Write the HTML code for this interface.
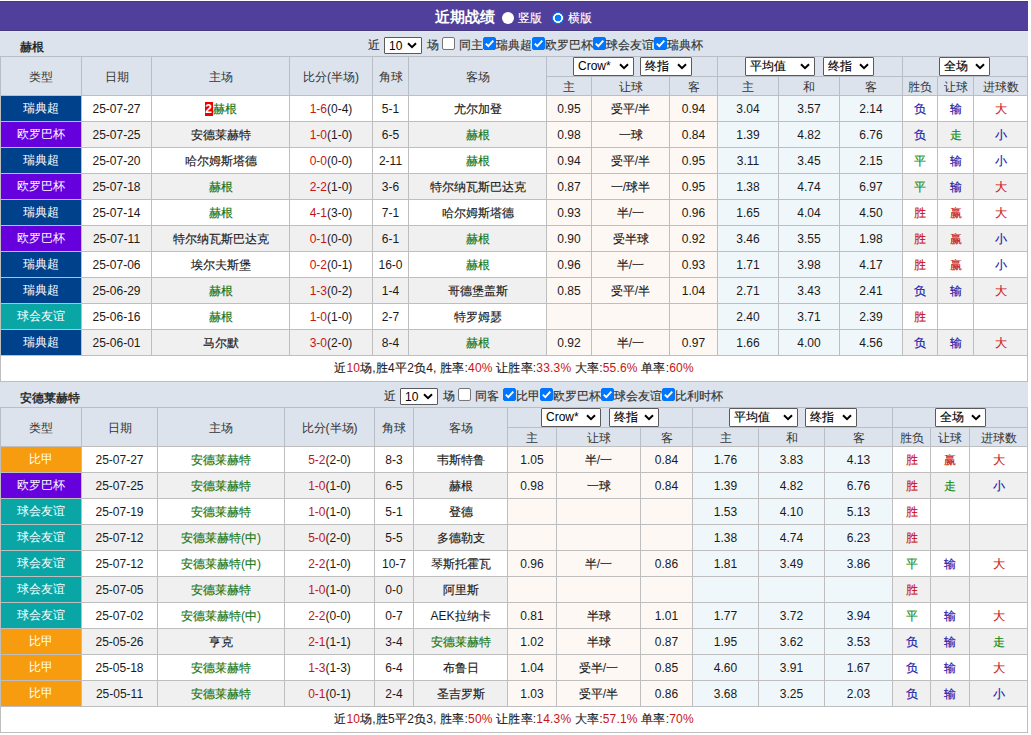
<!DOCTYPE html><html><head><meta charset="utf-8"><style>
html,body{margin:0;padding:0;background:#fff;}
body{width:1031px;height:735px;overflow:hidden;position:relative;font-family:"Liberation Sans", sans-serif;font-size:12px;}
.t{position:absolute;white-space:nowrap;font-family:"Liberation Sans", sans-serif;}
.c{-webkit-text-stroke:0.15px currentColor;}
.b .c,.w .c{-webkit-text-stroke:0;}
.st .c{-webkit-text-stroke:0.35px currentColor;}
.rk{display:inline-block;font-weight:bold;background:#e00;color:#fff;width:8px;height:14px;line-height:14px;text-align:center;vertical-align:middle;position:relative;top:-1px;}
.sel{position:absolute;box-sizing:border-box;background:#fff;border:1px solid #5a5a5a;border-radius:1px;color:#000;line-height:16px;white-space:nowrap;}
.sel > span{position:absolute;left:4px;top:0px;}
.cb{position:absolute;width:13px;height:13px;box-sizing:border-box;border:1px solid #767676;border-radius:2px;background:#fff;}
.cb.on{background:#0075ff;border-color:#0075ff;}
.cb svg{position:absolute;left:-1px;top:-1px;}
.rad{position:absolute;width:12px;height:12px;border-radius:50%;background:#fff;box-sizing:border-box;}
.rad.on{background:radial-gradient(circle closest-side,#0a7aff 0,#0a7aff 52%,#fff 60%,#fff 78%,#0a7aff 86%);}
</style></head><body><div style="position:absolute;left:0px;top:1px;width:1028px;height:30px;background:#51409b;box-sizing:border-box;border-top:1px solid #463b80;border-bottom:1px solid #463b80;"></div><div class="t b" style="left:435px;top:3px;height:28px;line-height:28px;font-size:15px;font-weight:bold;color:#fff"><span class="c">近期战绩</span></div><div class="rad" style="left:501.5px;top:11.5px"></div><div class="t" style="left:518px;top:4px;height:28px;line-height:28px;font-size:12px;color:#fff"><span class="c">竖版</span></div><div class="rad on" style="left:551.5px;top:11.5px"></div><div class="t" style="left:568px;top:4px;height:28px;line-height:28px;font-size:12px;color:#fff"><span class="c">横版</span></div><div style="position:absolute;left:0px;top:31px;width:1028px;height:25px;background:#dce3ec;"></div><div class="t st" style="left:20px;top:35px;width:200px;height:25px;line-height:25px;color:#1a1a1a;font-size:12px;font-weight:normal;text-align:left;"><span class="c">赫根</span></div><div class="t" style="left:368px;top:33px;height:25px;line-height:25px;font-size:12px;color:#333"><span class="c">近</span></div><div class="sel" style="left:384px;top:37px;width:38px;height:17px;font-family:"Liberation Mono",monospace;font-size:12px;"><span style="top:0px">10</span><svg width="10" height="7" viewBox="0 0 10 7" style="position:absolute;right:4px;top:4px"><path d="M1 1.2 L5 5.2 L9 1.2" stroke="#000" stroke-width="2" fill="none"/></svg></div><div class="t" style="left:427px;top:33px;height:25px;line-height:25px;font-size:12px;color:#333"><span class="c">场</span></div><div class="cb" style="left:442px;top:37px"></div><div class="t" style="left:459px;top:33px;height:25px;line-height:25px;font-size:12px;color:#333"><span class="c">同主</span></div><div class="cb on" style="left:483px;top:37px"><svg width="13" height="13" viewBox="0 0 13 13"><path d="M2.8 6.6 L5.3 9.2 L10.3 3.6" stroke="#fff" stroke-width="1.9" fill="none"/></svg></div><div class="t" style="left:496px;top:33px;height:25px;line-height:25px;font-size:12px;color:#333"><span class="c">瑞典超</span></div><div class="cb on" style="left:532px;top:37px"><svg width="13" height="13" viewBox="0 0 13 13"><path d="M2.8 6.6 L5.3 9.2 L10.3 3.6" stroke="#fff" stroke-width="1.9" fill="none"/></svg></div><div class="t" style="left:545px;top:33px;height:25px;line-height:25px;font-size:12px;color:#333"><span class="c">欧罗巴杯</span></div><div class="cb on" style="left:593px;top:37px"><svg width="13" height="13" viewBox="0 0 13 13"><path d="M2.8 6.6 L5.3 9.2 L10.3 3.6" stroke="#fff" stroke-width="1.9" fill="none"/></svg></div><div class="t" style="left:606px;top:33px;height:25px;line-height:25px;font-size:12px;color:#333"><span class="c">球会友谊</span></div><div class="cb on" style="left:654px;top:37px"><svg width="13" height="13" viewBox="0 0 13 13"><path d="M2.8 6.6 L5.3 9.2 L10.3 3.6" stroke="#fff" stroke-width="1.9" fill="none"/></svg></div><div class="t" style="left:667px;top:33px;height:25px;line-height:25px;font-size:12px;color:#333"><span class="c">瑞典杯</span></div><div style="position:absolute;left:0px;top:56px;width:1028px;height:39px;background:#dce3ec;"></div><div style="position:absolute;left:0px;top:95px;width:1028px;height:26px;background:#fff;"></div><div style="position:absolute;left:546px;top:95px;width:171px;height:26px;background:#fdf8f3;"></div><div style="position:absolute;left:717px;top:95px;width:185px;height:26px;background:#f0f7fb;"></div><div style="position:absolute;left:1px;top:96px;width:80px;height:25px;background:#00418c;"></div><div style="position:absolute;left:0px;top:121px;width:1028px;height:26px;background:#f0f0f0;"></div><div style="position:absolute;left:546px;top:121px;width:171px;height:26px;background:#fdf8f3;"></div><div style="position:absolute;left:717px;top:121px;width:185px;height:26px;background:#f0f7fb;"></div><div style="position:absolute;left:1px;top:122px;width:80px;height:25px;background:#6600dd;"></div><div style="position:absolute;left:0px;top:147px;width:1028px;height:26px;background:#fff;"></div><div style="position:absolute;left:546px;top:147px;width:171px;height:26px;background:#fdf8f3;"></div><div style="position:absolute;left:717px;top:147px;width:185px;height:26px;background:#f0f7fb;"></div><div style="position:absolute;left:1px;top:148px;width:80px;height:25px;background:#00418c;"></div><div style="position:absolute;left:0px;top:173px;width:1028px;height:26px;background:#f0f0f0;"></div><div style="position:absolute;left:546px;top:173px;width:171px;height:26px;background:#fdf8f3;"></div><div style="position:absolute;left:717px;top:173px;width:185px;height:26px;background:#f0f7fb;"></div><div style="position:absolute;left:1px;top:174px;width:80px;height:25px;background:#6600dd;"></div><div style="position:absolute;left:0px;top:199px;width:1028px;height:26px;background:#fff;"></div><div style="position:absolute;left:546px;top:199px;width:171px;height:26px;background:#fdf8f3;"></div><div style="position:absolute;left:717px;top:199px;width:185px;height:26px;background:#f0f7fb;"></div><div style="position:absolute;left:1px;top:200px;width:80px;height:25px;background:#00418c;"></div><div style="position:absolute;left:0px;top:225px;width:1028px;height:26px;background:#f0f0f0;"></div><div style="position:absolute;left:546px;top:225px;width:171px;height:26px;background:#fdf8f3;"></div><div style="position:absolute;left:717px;top:225px;width:185px;height:26px;background:#f0f7fb;"></div><div style="position:absolute;left:1px;top:226px;width:80px;height:25px;background:#6600dd;"></div><div style="position:absolute;left:0px;top:251px;width:1028px;height:26px;background:#fff;"></div><div style="position:absolute;left:546px;top:251px;width:171px;height:26px;background:#fdf8f3;"></div><div style="position:absolute;left:717px;top:251px;width:185px;height:26px;background:#f0f7fb;"></div><div style="position:absolute;left:1px;top:252px;width:80px;height:25px;background:#00418c;"></div><div style="position:absolute;left:0px;top:277px;width:1028px;height:26px;background:#f0f0f0;"></div><div style="position:absolute;left:546px;top:277px;width:171px;height:26px;background:#fdf8f3;"></div><div style="position:absolute;left:717px;top:277px;width:185px;height:26px;background:#f0f7fb;"></div><div style="position:absolute;left:1px;top:278px;width:80px;height:25px;background:#00418c;"></div><div style="position:absolute;left:0px;top:303px;width:1028px;height:26px;background:#fff;"></div><div style="position:absolute;left:546px;top:303px;width:171px;height:26px;background:#fdf8f3;"></div><div style="position:absolute;left:717px;top:303px;width:185px;height:26px;background:#f0f7fb;"></div><div style="position:absolute;left:1px;top:304px;width:80px;height:25px;background:#0aa5a5;"></div><div style="position:absolute;left:0px;top:329px;width:1028px;height:26px;background:#f0f0f0;"></div><div style="position:absolute;left:546px;top:329px;width:171px;height:26px;background:#fdf8f3;"></div><div style="position:absolute;left:717px;top:329px;width:185px;height:26px;background:#f0f7fb;"></div><div style="position:absolute;left:1px;top:330px;width:80px;height:25px;background:#00418c;"></div><div style="position:absolute;left:0px;top:355px;width:1028px;height:26px;background:#fff;"></div><div style="position:absolute;left:0px;top:56px;width:1px;height:39px;background:#b9bec6;"></div><div style="position:absolute;left:0px;top:95px;width:1px;height:287px;background:#bebebe;"></div><div style="position:absolute;left:81px;top:56px;width:1px;height:39px;background:#b9bec6;"></div><div style="position:absolute;left:81px;top:95px;width:1px;height:260px;background:#bebebe;"></div><div style="position:absolute;left:151px;top:56px;width:1px;height:39px;background:#b9bec6;"></div><div style="position:absolute;left:151px;top:95px;width:1px;height:260px;background:#bebebe;"></div><div style="position:absolute;left:289px;top:56px;width:1px;height:39px;background:#b9bec6;"></div><div style="position:absolute;left:289px;top:95px;width:1px;height:260px;background:#bebebe;"></div><div style="position:absolute;left:372px;top:56px;width:1px;height:39px;background:#b9bec6;"></div><div style="position:absolute;left:372px;top:95px;width:1px;height:260px;background:#bebebe;"></div><div style="position:absolute;left:408px;top:56px;width:1px;height:39px;background:#b9bec6;"></div><div style="position:absolute;left:408px;top:95px;width:1px;height:260px;background:#bebebe;"></div><div style="position:absolute;left:546px;top:56px;width:1px;height:39px;background:#b9bec6;"></div><div style="position:absolute;left:546px;top:95px;width:1px;height:260px;background:#bebebe;"></div><div style="position:absolute;left:591px;top:76px;width:1px;height:19px;background:#b9bec6;"></div><div style="position:absolute;left:591px;top:95px;width:1px;height:260px;background:#bebebe;"></div><div style="position:absolute;left:669px;top:76px;width:1px;height:19px;background:#b9bec6;"></div><div style="position:absolute;left:669px;top:95px;width:1px;height:260px;background:#bebebe;"></div><div style="position:absolute;left:717px;top:56px;width:1px;height:39px;background:#b9bec6;"></div><div style="position:absolute;left:717px;top:95px;width:1px;height:260px;background:#bebebe;"></div><div style="position:absolute;left:778px;top:76px;width:1px;height:19px;background:#b9bec6;"></div><div style="position:absolute;left:778px;top:95px;width:1px;height:260px;background:#bebebe;"></div><div style="position:absolute;left:839px;top:76px;width:1px;height:19px;background:#b9bec6;"></div><div style="position:absolute;left:839px;top:95px;width:1px;height:260px;background:#bebebe;"></div><div style="position:absolute;left:902px;top:56px;width:1px;height:39px;background:#b9bec6;"></div><div style="position:absolute;left:902px;top:95px;width:1px;height:260px;background:#bebebe;"></div><div style="position:absolute;left:937px;top:76px;width:1px;height:19px;background:#b9bec6;"></div><div style="position:absolute;left:937px;top:95px;width:1px;height:260px;background:#bebebe;"></div><div style="position:absolute;left:973px;top:76px;width:1px;height:19px;background:#b9bec6;"></div><div style="position:absolute;left:973px;top:95px;width:1px;height:260px;background:#bebebe;"></div><div style="position:absolute;left:1027px;top:56px;width:1px;height:39px;background:#b9bec6;"></div><div style="position:absolute;left:1027px;top:95px;width:1px;height:287px;background:#bebebe;"></div><div style="position:absolute;left:0px;top:56px;width:1028px;height:1px;background:#b9bec6;"></div><div style="position:absolute;left:546px;top:76px;width:481px;height:1px;background:#b9bec6;"></div><div style="position:absolute;left:0px;top:95px;width:1028px;height:1px;background:#bebebe;"></div><div style="position:absolute;left:0px;top:121px;width:1028px;height:1px;background:#bebebe;"></div><div style="position:absolute;left:0px;top:147px;width:1028px;height:1px;background:#bebebe;"></div><div style="position:absolute;left:0px;top:173px;width:1028px;height:1px;background:#bebebe;"></div><div style="position:absolute;left:0px;top:199px;width:1028px;height:1px;background:#bebebe;"></div><div style="position:absolute;left:0px;top:225px;width:1028px;height:1px;background:#bebebe;"></div><div style="position:absolute;left:0px;top:251px;width:1028px;height:1px;background:#bebebe;"></div><div style="position:absolute;left:0px;top:277px;width:1028px;height:1px;background:#bebebe;"></div><div style="position:absolute;left:0px;top:303px;width:1028px;height:1px;background:#bebebe;"></div><div style="position:absolute;left:0px;top:329px;width:1028px;height:1px;background:#bebebe;"></div><div style="position:absolute;left:0px;top:355px;width:1028px;height:1px;background:#bebebe;"></div><div style="position:absolute;left:0px;top:381px;width:1028px;height:1px;background:#bebebe;"></div><div class="t w" style="left:1px;top:58px;width:80px;height:38px;line-height:38px;color:#333;font-size:12px;font-weight:normal;text-align:center;"><span class="c">类型</span></div><div class="t w" style="left:82px;top:58px;width:69px;height:38px;line-height:38px;color:#333;font-size:12px;font-weight:normal;text-align:center;"><span class="c">日期</span></div><div class="t w" style="left:152px;top:58px;width:137px;height:38px;line-height:38px;color:#333;font-size:12px;font-weight:normal;text-align:center;"><span class="c">主场</span></div><div class="t w" style="left:290px;top:58px;width:82px;height:38px;line-height:38px;color:#333;font-size:12px;font-weight:normal;text-align:center;"><span class="c">比分</span>(<span class="c">半场</span>)</div><div class="t w" style="left:373px;top:58px;width:35px;height:38px;line-height:38px;color:#333;font-size:12px;font-weight:normal;text-align:center;"><span class="c">角球</span></div><div class="t w" style="left:409px;top:58px;width:137px;height:38px;line-height:38px;color:#333;font-size:12px;font-weight:normal;text-align:center;"><span class="c">客场</span></div><div class="t w" style="left:547px;top:78px;width:44px;height:18px;line-height:18px;color:#333;font-size:12px;font-weight:normal;text-align:center;"><span class="c">主</span></div><div class="t w" style="left:592px;top:78px;width:77px;height:18px;line-height:18px;color:#333;font-size:12px;font-weight:normal;text-align:center;"><span class="c">让球</span></div><div class="t w" style="left:670px;top:78px;width:47px;height:18px;line-height:18px;color:#333;font-size:12px;font-weight:normal;text-align:center;"><span class="c">客</span></div><div class="t w" style="left:718px;top:78px;width:60px;height:18px;line-height:18px;color:#333;font-size:12px;font-weight:normal;text-align:center;"><span class="c">主</span></div><div class="t w" style="left:779px;top:78px;width:60px;height:18px;line-height:18px;color:#333;font-size:12px;font-weight:normal;text-align:center;"><span class="c">和</span></div><div class="t w" style="left:840px;top:78px;width:62px;height:18px;line-height:18px;color:#333;font-size:12px;font-weight:normal;text-align:center;"><span class="c">客</span></div><div class="t w" style="left:903px;top:78px;width:34px;height:18px;line-height:18px;color:#333;font-size:12px;font-weight:normal;text-align:center;"><span class="c">胜负</span></div><div class="t w" style="left:938px;top:78px;width:35px;height:18px;line-height:18px;color:#333;font-size:12px;font-weight:normal;text-align:center;"><span class="c">让球</span></div><div class="t w" style="left:974px;top:78px;width:53px;height:18px;line-height:18px;color:#333;font-size:12px;font-weight:normal;text-align:center;"><span class="c">进球数</span></div><div class="t w" style="left:1px;top:96px;width:80px;height:25px;line-height:25px;color:#fff;font-size:12px;font-weight:normal;text-align:center;"><span class="c">瑞典超</span></div><div class="t" style="left:82px;top:97px;width:69px;height:25px;line-height:25px;color:#1a1a1a;font-size:12px;font-weight:normal;text-align:center;">25-07-27</div><div class="t" style="left:152px;top:97px;width:137px;height:25px;line-height:25px;color:#1a1a1a;font-size:12px;font-weight:normal;text-align:center;"><span class="rk">2</span><span style="color:#157515"><span class="c">赫根</span></span></div><div class="t" style="left:290px;top:97px;width:82px;height:25px;line-height:25px;color:#1a1a1a;font-size:12px;font-weight:normal;text-align:center;"><span style="color:#c81414">1-6</span>(0-4)</div><div class="t" style="left:373px;top:97px;width:35px;height:25px;line-height:25px;color:#1a1a1a;font-size:12px;font-weight:normal;text-align:center;">5-1</div><div class="t" style="left:409px;top:97px;width:137px;height:25px;line-height:25px;color:#1a1a1a;font-size:12px;font-weight:normal;text-align:center;"><span class="c">尤尔加登</span></div><div class="t" style="left:547px;top:97px;width:44px;height:25px;line-height:25px;color:#1a1a1a;font-size:12px;font-weight:normal;text-align:center;">0.95</div><div class="t" style="left:592px;top:97px;width:77px;height:25px;line-height:25px;color:#1a1a1a;font-size:12px;font-weight:normal;text-align:center;"><span class="c">受平</span>/<span class="c">半</span></div><div class="t" style="left:670px;top:97px;width:47px;height:25px;line-height:25px;color:#1a1a1a;font-size:12px;font-weight:normal;text-align:center;">0.94</div><div class="t" style="left:718px;top:97px;width:60px;height:25px;line-height:25px;color:#1a1a1a;font-size:12px;font-weight:normal;text-align:center;">3.04</div><div class="t" style="left:779px;top:97px;width:60px;height:25px;line-height:25px;color:#1a1a1a;font-size:12px;font-weight:normal;text-align:center;">3.57</div><div class="t" style="left:840px;top:97px;width:62px;height:25px;line-height:25px;color:#1a1a1a;font-size:12px;font-weight:normal;text-align:center;">2.14</div><div class="t" style="left:903px;top:97px;width:34px;height:25px;line-height:25px;color:#1414a8;font-size:12px;font-weight:normal;text-align:center;"><span class="c">负</span></div><div class="t" style="left:938px;top:97px;width:35px;height:25px;line-height:25px;color:#1414a8;font-size:12px;font-weight:normal;text-align:center;"><span class="c">输</span></div><div class="t" style="left:974px;top:97px;width:53px;height:25px;line-height:25px;color:#c81414;font-size:12px;font-weight:normal;text-align:center;"><span class="c">大</span></div><div class="t w" style="left:1px;top:122px;width:80px;height:25px;line-height:25px;color:#fff;font-size:12px;font-weight:normal;text-align:center;"><span class="c">欧罗巴杯</span></div><div class="t" style="left:82px;top:123px;width:69px;height:25px;line-height:25px;color:#1a1a1a;font-size:12px;font-weight:normal;text-align:center;">25-07-25</div><div class="t" style="left:152px;top:123px;width:137px;height:25px;line-height:25px;color:#1a1a1a;font-size:12px;font-weight:normal;text-align:center;"><span class="c">安德莱赫特</span></div><div class="t" style="left:290px;top:123px;width:82px;height:25px;line-height:25px;color:#1a1a1a;font-size:12px;font-weight:normal;text-align:center;"><span style="color:#c81414">1-0</span>(1-0)</div><div class="t" style="left:373px;top:123px;width:35px;height:25px;line-height:25px;color:#1a1a1a;font-size:12px;font-weight:normal;text-align:center;">6-5</div><div class="t" style="left:409px;top:123px;width:137px;height:25px;line-height:25px;color:#1a1a1a;font-size:12px;font-weight:normal;text-align:center;"><span style="color:#157515"><span class="c">赫根</span></span></div><div class="t" style="left:547px;top:123px;width:44px;height:25px;line-height:25px;color:#1a1a1a;font-size:12px;font-weight:normal;text-align:center;">0.98</div><div class="t" style="left:592px;top:123px;width:77px;height:25px;line-height:25px;color:#1a1a1a;font-size:12px;font-weight:normal;text-align:center;"><span class="c">一球</span></div><div class="t" style="left:670px;top:123px;width:47px;height:25px;line-height:25px;color:#1a1a1a;font-size:12px;font-weight:normal;text-align:center;">0.84</div><div class="t" style="left:718px;top:123px;width:60px;height:25px;line-height:25px;color:#1a1a1a;font-size:12px;font-weight:normal;text-align:center;">1.39</div><div class="t" style="left:779px;top:123px;width:60px;height:25px;line-height:25px;color:#1a1a1a;font-size:12px;font-weight:normal;text-align:center;">4.82</div><div class="t" style="left:840px;top:123px;width:62px;height:25px;line-height:25px;color:#1a1a1a;font-size:12px;font-weight:normal;text-align:center;">6.76</div><div class="t" style="left:903px;top:123px;width:34px;height:25px;line-height:25px;color:#1414a8;font-size:12px;font-weight:normal;text-align:center;"><span class="c">负</span></div><div class="t" style="left:938px;top:123px;width:35px;height:25px;line-height:25px;color:#0f8a0f;font-size:12px;font-weight:normal;text-align:center;"><span class="c">走</span></div><div class="t" style="left:974px;top:123px;width:53px;height:25px;line-height:25px;color:#1414a8;font-size:12px;font-weight:normal;text-align:center;"><span class="c">小</span></div><div class="t w" style="left:1px;top:148px;width:80px;height:25px;line-height:25px;color:#fff;font-size:12px;font-weight:normal;text-align:center;"><span class="c">瑞典超</span></div><div class="t" style="left:82px;top:149px;width:69px;height:25px;line-height:25px;color:#1a1a1a;font-size:12px;font-weight:normal;text-align:center;">25-07-20</div><div class="t" style="left:152px;top:149px;width:137px;height:25px;line-height:25px;color:#1a1a1a;font-size:12px;font-weight:normal;text-align:center;"><span class="c">哈尔姆斯塔德</span></div><div class="t" style="left:290px;top:149px;width:82px;height:25px;line-height:25px;color:#1a1a1a;font-size:12px;font-weight:normal;text-align:center;"><span style="color:#c81414">0-0</span>(0-0)</div><div class="t" style="left:373px;top:149px;width:35px;height:25px;line-height:25px;color:#1a1a1a;font-size:12px;font-weight:normal;text-align:center;">2-11</div><div class="t" style="left:409px;top:149px;width:137px;height:25px;line-height:25px;color:#1a1a1a;font-size:12px;font-weight:normal;text-align:center;"><span style="color:#157515"><span class="c">赫根</span></span></div><div class="t" style="left:547px;top:149px;width:44px;height:25px;line-height:25px;color:#1a1a1a;font-size:12px;font-weight:normal;text-align:center;">0.94</div><div class="t" style="left:592px;top:149px;width:77px;height:25px;line-height:25px;color:#1a1a1a;font-size:12px;font-weight:normal;text-align:center;"><span class="c">受平</span>/<span class="c">半</span></div><div class="t" style="left:670px;top:149px;width:47px;height:25px;line-height:25px;color:#1a1a1a;font-size:12px;font-weight:normal;text-align:center;">0.95</div><div class="t" style="left:718px;top:149px;width:60px;height:25px;line-height:25px;color:#1a1a1a;font-size:12px;font-weight:normal;text-align:center;">3.11</div><div class="t" style="left:779px;top:149px;width:60px;height:25px;line-height:25px;color:#1a1a1a;font-size:12px;font-weight:normal;text-align:center;">3.45</div><div class="t" style="left:840px;top:149px;width:62px;height:25px;line-height:25px;color:#1a1a1a;font-size:12px;font-weight:normal;text-align:center;">2.15</div><div class="t" style="left:903px;top:149px;width:34px;height:25px;line-height:25px;color:#0f8a0f;font-size:12px;font-weight:normal;text-align:center;"><span class="c">平</span></div><div class="t" style="left:938px;top:149px;width:35px;height:25px;line-height:25px;color:#1414a8;font-size:12px;font-weight:normal;text-align:center;"><span class="c">输</span></div><div class="t" style="left:974px;top:149px;width:53px;height:25px;line-height:25px;color:#1414a8;font-size:12px;font-weight:normal;text-align:center;"><span class="c">小</span></div><div class="t w" style="left:1px;top:174px;width:80px;height:25px;line-height:25px;color:#fff;font-size:12px;font-weight:normal;text-align:center;"><span class="c">欧罗巴杯</span></div><div class="t" style="left:82px;top:175px;width:69px;height:25px;line-height:25px;color:#1a1a1a;font-size:12px;font-weight:normal;text-align:center;">25-07-18</div><div class="t" style="left:152px;top:175px;width:137px;height:25px;line-height:25px;color:#1a1a1a;font-size:12px;font-weight:normal;text-align:center;"><span style="color:#157515"><span class="c">赫根</span></span></div><div class="t" style="left:290px;top:175px;width:82px;height:25px;line-height:25px;color:#1a1a1a;font-size:12px;font-weight:normal;text-align:center;"><span style="color:#c81414">2-2</span>(1-0)</div><div class="t" style="left:373px;top:175px;width:35px;height:25px;line-height:25px;color:#1a1a1a;font-size:12px;font-weight:normal;text-align:center;">3-6</div><div class="t" style="left:409px;top:175px;width:137px;height:25px;line-height:25px;color:#1a1a1a;font-size:12px;font-weight:normal;text-align:center;"><span class="c">特尔纳瓦斯巴达克</span></div><div class="t" style="left:547px;top:175px;width:44px;height:25px;line-height:25px;color:#1a1a1a;font-size:12px;font-weight:normal;text-align:center;">0.87</div><div class="t" style="left:592px;top:175px;width:77px;height:25px;line-height:25px;color:#1a1a1a;font-size:12px;font-weight:normal;text-align:center;"><span class="c">一</span>/<span class="c">球半</span></div><div class="t" style="left:670px;top:175px;width:47px;height:25px;line-height:25px;color:#1a1a1a;font-size:12px;font-weight:normal;text-align:center;">0.95</div><div class="t" style="left:718px;top:175px;width:60px;height:25px;line-height:25px;color:#1a1a1a;font-size:12px;font-weight:normal;text-align:center;">1.38</div><div class="t" style="left:779px;top:175px;width:60px;height:25px;line-height:25px;color:#1a1a1a;font-size:12px;font-weight:normal;text-align:center;">4.74</div><div class="t" style="left:840px;top:175px;width:62px;height:25px;line-height:25px;color:#1a1a1a;font-size:12px;font-weight:normal;text-align:center;">6.97</div><div class="t" style="left:903px;top:175px;width:34px;height:25px;line-height:25px;color:#0f8a0f;font-size:12px;font-weight:normal;text-align:center;"><span class="c">平</span></div><div class="t" style="left:938px;top:175px;width:35px;height:25px;line-height:25px;color:#1414a8;font-size:12px;font-weight:normal;text-align:center;"><span class="c">输</span></div><div class="t" style="left:974px;top:175px;width:53px;height:25px;line-height:25px;color:#c81414;font-size:12px;font-weight:normal;text-align:center;"><span class="c">大</span></div><div class="t w" style="left:1px;top:200px;width:80px;height:25px;line-height:25px;color:#fff;font-size:12px;font-weight:normal;text-align:center;"><span class="c">瑞典超</span></div><div class="t" style="left:82px;top:201px;width:69px;height:25px;line-height:25px;color:#1a1a1a;font-size:12px;font-weight:normal;text-align:center;">25-07-14</div><div class="t" style="left:152px;top:201px;width:137px;height:25px;line-height:25px;color:#1a1a1a;font-size:12px;font-weight:normal;text-align:center;"><span style="color:#157515"><span class="c">赫根</span></span></div><div class="t" style="left:290px;top:201px;width:82px;height:25px;line-height:25px;color:#1a1a1a;font-size:12px;font-weight:normal;text-align:center;"><span style="color:#c81414">4-1</span>(3-0)</div><div class="t" style="left:373px;top:201px;width:35px;height:25px;line-height:25px;color:#1a1a1a;font-size:12px;font-weight:normal;text-align:center;">7-1</div><div class="t" style="left:409px;top:201px;width:137px;height:25px;line-height:25px;color:#1a1a1a;font-size:12px;font-weight:normal;text-align:center;"><span class="c">哈尔姆斯塔德</span></div><div class="t" style="left:547px;top:201px;width:44px;height:25px;line-height:25px;color:#1a1a1a;font-size:12px;font-weight:normal;text-align:center;">0.93</div><div class="t" style="left:592px;top:201px;width:77px;height:25px;line-height:25px;color:#1a1a1a;font-size:12px;font-weight:normal;text-align:center;"><span class="c">半</span>/<span class="c">一</span></div><div class="t" style="left:670px;top:201px;width:47px;height:25px;line-height:25px;color:#1a1a1a;font-size:12px;font-weight:normal;text-align:center;">0.96</div><div class="t" style="left:718px;top:201px;width:60px;height:25px;line-height:25px;color:#1a1a1a;font-size:12px;font-weight:normal;text-align:center;">1.65</div><div class="t" style="left:779px;top:201px;width:60px;height:25px;line-height:25px;color:#1a1a1a;font-size:12px;font-weight:normal;text-align:center;">4.04</div><div class="t" style="left:840px;top:201px;width:62px;height:25px;line-height:25px;color:#1a1a1a;font-size:12px;font-weight:normal;text-align:center;">4.50</div><div class="t" style="left:903px;top:201px;width:34px;height:25px;line-height:25px;color:#c81414;font-size:12px;font-weight:normal;text-align:center;"><span class="c">胜</span></div><div class="t" style="left:938px;top:201px;width:35px;height:25px;line-height:25px;color:#c81414;font-size:12px;font-weight:normal;text-align:center;"><span class="c">赢</span></div><div class="t" style="left:974px;top:201px;width:53px;height:25px;line-height:25px;color:#c81414;font-size:12px;font-weight:normal;text-align:center;"><span class="c">大</span></div><div class="t w" style="left:1px;top:226px;width:80px;height:25px;line-height:25px;color:#fff;font-size:12px;font-weight:normal;text-align:center;"><span class="c">欧罗巴杯</span></div><div class="t" style="left:82px;top:227px;width:69px;height:25px;line-height:25px;color:#1a1a1a;font-size:12px;font-weight:normal;text-align:center;">25-07-11</div><div class="t" style="left:152px;top:227px;width:137px;height:25px;line-height:25px;color:#1a1a1a;font-size:12px;font-weight:normal;text-align:center;"><span class="c">特尔纳瓦斯巴达克</span></div><div class="t" style="left:290px;top:227px;width:82px;height:25px;line-height:25px;color:#1a1a1a;font-size:12px;font-weight:normal;text-align:center;"><span style="color:#c81414">0-1</span>(0-0)</div><div class="t" style="left:373px;top:227px;width:35px;height:25px;line-height:25px;color:#1a1a1a;font-size:12px;font-weight:normal;text-align:center;">6-1</div><div class="t" style="left:409px;top:227px;width:137px;height:25px;line-height:25px;color:#1a1a1a;font-size:12px;font-weight:normal;text-align:center;"><span style="color:#157515"><span class="c">赫根</span></span></div><div class="t" style="left:547px;top:227px;width:44px;height:25px;line-height:25px;color:#1a1a1a;font-size:12px;font-weight:normal;text-align:center;">0.90</div><div class="t" style="left:592px;top:227px;width:77px;height:25px;line-height:25px;color:#1a1a1a;font-size:12px;font-weight:normal;text-align:center;"><span class="c">受半球</span></div><div class="t" style="left:670px;top:227px;width:47px;height:25px;line-height:25px;color:#1a1a1a;font-size:12px;font-weight:normal;text-align:center;">0.92</div><div class="t" style="left:718px;top:227px;width:60px;height:25px;line-height:25px;color:#1a1a1a;font-size:12px;font-weight:normal;text-align:center;">3.46</div><div class="t" style="left:779px;top:227px;width:60px;height:25px;line-height:25px;color:#1a1a1a;font-size:12px;font-weight:normal;text-align:center;">3.55</div><div class="t" style="left:840px;top:227px;width:62px;height:25px;line-height:25px;color:#1a1a1a;font-size:12px;font-weight:normal;text-align:center;">1.98</div><div class="t" style="left:903px;top:227px;width:34px;height:25px;line-height:25px;color:#c81414;font-size:12px;font-weight:normal;text-align:center;"><span class="c">胜</span></div><div class="t" style="left:938px;top:227px;width:35px;height:25px;line-height:25px;color:#c81414;font-size:12px;font-weight:normal;text-align:center;"><span class="c">赢</span></div><div class="t" style="left:974px;top:227px;width:53px;height:25px;line-height:25px;color:#1414a8;font-size:12px;font-weight:normal;text-align:center;"><span class="c">小</span></div><div class="t w" style="left:1px;top:252px;width:80px;height:25px;line-height:25px;color:#fff;font-size:12px;font-weight:normal;text-align:center;"><span class="c">瑞典超</span></div><div class="t" style="left:82px;top:253px;width:69px;height:25px;line-height:25px;color:#1a1a1a;font-size:12px;font-weight:normal;text-align:center;">25-07-06</div><div class="t" style="left:152px;top:253px;width:137px;height:25px;line-height:25px;color:#1a1a1a;font-size:12px;font-weight:normal;text-align:center;"><span class="c">埃尔夫斯堡</span></div><div class="t" style="left:290px;top:253px;width:82px;height:25px;line-height:25px;color:#1a1a1a;font-size:12px;font-weight:normal;text-align:center;"><span style="color:#c81414">0-2</span>(0-1)</div><div class="t" style="left:373px;top:253px;width:35px;height:25px;line-height:25px;color:#1a1a1a;font-size:12px;font-weight:normal;text-align:center;">16-0</div><div class="t" style="left:409px;top:253px;width:137px;height:25px;line-height:25px;color:#1a1a1a;font-size:12px;font-weight:normal;text-align:center;"><span style="color:#157515"><span class="c">赫根</span></span></div><div class="t" style="left:547px;top:253px;width:44px;height:25px;line-height:25px;color:#1a1a1a;font-size:12px;font-weight:normal;text-align:center;">0.96</div><div class="t" style="left:592px;top:253px;width:77px;height:25px;line-height:25px;color:#1a1a1a;font-size:12px;font-weight:normal;text-align:center;"><span class="c">半</span>/<span class="c">一</span></div><div class="t" style="left:670px;top:253px;width:47px;height:25px;line-height:25px;color:#1a1a1a;font-size:12px;font-weight:normal;text-align:center;">0.93</div><div class="t" style="left:718px;top:253px;width:60px;height:25px;line-height:25px;color:#1a1a1a;font-size:12px;font-weight:normal;text-align:center;">1.71</div><div class="t" style="left:779px;top:253px;width:60px;height:25px;line-height:25px;color:#1a1a1a;font-size:12px;font-weight:normal;text-align:center;">3.98</div><div class="t" style="left:840px;top:253px;width:62px;height:25px;line-height:25px;color:#1a1a1a;font-size:12px;font-weight:normal;text-align:center;">4.17</div><div class="t" style="left:903px;top:253px;width:34px;height:25px;line-height:25px;color:#c81414;font-size:12px;font-weight:normal;text-align:center;"><span class="c">胜</span></div><div class="t" style="left:938px;top:253px;width:35px;height:25px;line-height:25px;color:#c81414;font-size:12px;font-weight:normal;text-align:center;"><span class="c">赢</span></div><div class="t" style="left:974px;top:253px;width:53px;height:25px;line-height:25px;color:#1414a8;font-size:12px;font-weight:normal;text-align:center;"><span class="c">小</span></div><div class="t w" style="left:1px;top:278px;width:80px;height:25px;line-height:25px;color:#fff;font-size:12px;font-weight:normal;text-align:center;"><span class="c">瑞典超</span></div><div class="t" style="left:82px;top:279px;width:69px;height:25px;line-height:25px;color:#1a1a1a;font-size:12px;font-weight:normal;text-align:center;">25-06-29</div><div class="t" style="left:152px;top:279px;width:137px;height:25px;line-height:25px;color:#1a1a1a;font-size:12px;font-weight:normal;text-align:center;"><span style="color:#157515"><span class="c">赫根</span></span></div><div class="t" style="left:290px;top:279px;width:82px;height:25px;line-height:25px;color:#1a1a1a;font-size:12px;font-weight:normal;text-align:center;"><span style="color:#c81414">1-3</span>(0-2)</div><div class="t" style="left:373px;top:279px;width:35px;height:25px;line-height:25px;color:#1a1a1a;font-size:12px;font-weight:normal;text-align:center;">1-4</div><div class="t" style="left:409px;top:279px;width:137px;height:25px;line-height:25px;color:#1a1a1a;font-size:12px;font-weight:normal;text-align:center;"><span class="c">哥德堡盖斯</span></div><div class="t" style="left:547px;top:279px;width:44px;height:25px;line-height:25px;color:#1a1a1a;font-size:12px;font-weight:normal;text-align:center;">0.85</div><div class="t" style="left:592px;top:279px;width:77px;height:25px;line-height:25px;color:#1a1a1a;font-size:12px;font-weight:normal;text-align:center;"><span class="c">受平</span>/<span class="c">半</span></div><div class="t" style="left:670px;top:279px;width:47px;height:25px;line-height:25px;color:#1a1a1a;font-size:12px;font-weight:normal;text-align:center;">1.04</div><div class="t" style="left:718px;top:279px;width:60px;height:25px;line-height:25px;color:#1a1a1a;font-size:12px;font-weight:normal;text-align:center;">2.71</div><div class="t" style="left:779px;top:279px;width:60px;height:25px;line-height:25px;color:#1a1a1a;font-size:12px;font-weight:normal;text-align:center;">3.43</div><div class="t" style="left:840px;top:279px;width:62px;height:25px;line-height:25px;color:#1a1a1a;font-size:12px;font-weight:normal;text-align:center;">2.41</div><div class="t" style="left:903px;top:279px;width:34px;height:25px;line-height:25px;color:#1414a8;font-size:12px;font-weight:normal;text-align:center;"><span class="c">负</span></div><div class="t" style="left:938px;top:279px;width:35px;height:25px;line-height:25px;color:#1414a8;font-size:12px;font-weight:normal;text-align:center;"><span class="c">输</span></div><div class="t" style="left:974px;top:279px;width:53px;height:25px;line-height:25px;color:#c81414;font-size:12px;font-weight:normal;text-align:center;"><span class="c">大</span></div><div class="t w" style="left:1px;top:304px;width:80px;height:25px;line-height:25px;color:#fff;font-size:12px;font-weight:normal;text-align:center;"><span class="c">球会友谊</span></div><div class="t" style="left:82px;top:305px;width:69px;height:25px;line-height:25px;color:#1a1a1a;font-size:12px;font-weight:normal;text-align:center;">25-06-16</div><div class="t" style="left:152px;top:305px;width:137px;height:25px;line-height:25px;color:#1a1a1a;font-size:12px;font-weight:normal;text-align:center;"><span style="color:#157515"><span class="c">赫根</span></span></div><div class="t" style="left:290px;top:305px;width:82px;height:25px;line-height:25px;color:#1a1a1a;font-size:12px;font-weight:normal;text-align:center;"><span style="color:#c81414">1-0</span>(1-0)</div><div class="t" style="left:373px;top:305px;width:35px;height:25px;line-height:25px;color:#1a1a1a;font-size:12px;font-weight:normal;text-align:center;">2-7</div><div class="t" style="left:409px;top:305px;width:137px;height:25px;line-height:25px;color:#1a1a1a;font-size:12px;font-weight:normal;text-align:center;"><span class="c">特罗姆瑟</span></div><div class="t" style="left:547px;top:305px;width:44px;height:25px;line-height:25px;color:#1a1a1a;font-size:12px;font-weight:normal;text-align:center;"></div><div class="t" style="left:592px;top:305px;width:77px;height:25px;line-height:25px;color:#1a1a1a;font-size:12px;font-weight:normal;text-align:center;"></div><div class="t" style="left:670px;top:305px;width:47px;height:25px;line-height:25px;color:#1a1a1a;font-size:12px;font-weight:normal;text-align:center;"></div><div class="t" style="left:718px;top:305px;width:60px;height:25px;line-height:25px;color:#1a1a1a;font-size:12px;font-weight:normal;text-align:center;">2.40</div><div class="t" style="left:779px;top:305px;width:60px;height:25px;line-height:25px;color:#1a1a1a;font-size:12px;font-weight:normal;text-align:center;">3.71</div><div class="t" style="left:840px;top:305px;width:62px;height:25px;line-height:25px;color:#1a1a1a;font-size:12px;font-weight:normal;text-align:center;">2.39</div><div class="t" style="left:903px;top:305px;width:34px;height:25px;line-height:25px;color:#c81414;font-size:12px;font-weight:normal;text-align:center;"><span class="c">胜</span></div><div class="t" style="left:938px;top:305px;width:35px;height:25px;line-height:25px;color:#1a1a1a;font-size:12px;font-weight:normal;text-align:center;"></div><div class="t" style="left:974px;top:305px;width:53px;height:25px;line-height:25px;color:#1a1a1a;font-size:12px;font-weight:normal;text-align:center;"></div><div class="t w" style="left:1px;top:330px;width:80px;height:25px;line-height:25px;color:#fff;font-size:12px;font-weight:normal;text-align:center;"><span class="c">瑞典超</span></div><div class="t" style="left:82px;top:331px;width:69px;height:25px;line-height:25px;color:#1a1a1a;font-size:12px;font-weight:normal;text-align:center;">25-06-01</div><div class="t" style="left:152px;top:331px;width:137px;height:25px;line-height:25px;color:#1a1a1a;font-size:12px;font-weight:normal;text-align:center;"><span class="c">马尔默</span></div><div class="t" style="left:290px;top:331px;width:82px;height:25px;line-height:25px;color:#1a1a1a;font-size:12px;font-weight:normal;text-align:center;"><span style="color:#c81414">3-0</span>(2-0)</div><div class="t" style="left:373px;top:331px;width:35px;height:25px;line-height:25px;color:#1a1a1a;font-size:12px;font-weight:normal;text-align:center;">8-4</div><div class="t" style="left:409px;top:331px;width:137px;height:25px;line-height:25px;color:#1a1a1a;font-size:12px;font-weight:normal;text-align:center;"><span style="color:#157515"><span class="c">赫根</span></span></div><div class="t" style="left:547px;top:331px;width:44px;height:25px;line-height:25px;color:#1a1a1a;font-size:12px;font-weight:normal;text-align:center;">0.92</div><div class="t" style="left:592px;top:331px;width:77px;height:25px;line-height:25px;color:#1a1a1a;font-size:12px;font-weight:normal;text-align:center;"><span class="c">半</span>/<span class="c">一</span></div><div class="t" style="left:670px;top:331px;width:47px;height:25px;line-height:25px;color:#1a1a1a;font-size:12px;font-weight:normal;text-align:center;">0.97</div><div class="t" style="left:718px;top:331px;width:60px;height:25px;line-height:25px;color:#1a1a1a;font-size:12px;font-weight:normal;text-align:center;">1.66</div><div class="t" style="left:779px;top:331px;width:60px;height:25px;line-height:25px;color:#1a1a1a;font-size:12px;font-weight:normal;text-align:center;">4.00</div><div class="t" style="left:840px;top:331px;width:62px;height:25px;line-height:25px;color:#1a1a1a;font-size:12px;font-weight:normal;text-align:center;">4.56</div><div class="t" style="left:903px;top:331px;width:34px;height:25px;line-height:25px;color:#1414a8;font-size:12px;font-weight:normal;text-align:center;"><span class="c">负</span></div><div class="t" style="left:938px;top:331px;width:35px;height:25px;line-height:25px;color:#1414a8;font-size:12px;font-weight:normal;text-align:center;"><span class="c">输</span></div><div class="t" style="left:974px;top:331px;width:53px;height:25px;line-height:25px;color:#c81414;font-size:12px;font-weight:normal;text-align:center;"><span class="c">大</span></div><div class="t" style="left:1px;top:356px;width:1026px;height:25px;line-height:25px;color:#1a1a1a;font-size:12px;font-weight:normal;text-align:center;letter-spacing:0.19px;"><span class="c">近</span><span style="color:#c81414">10</span><span class="c">场</span>,<span class="c">胜</span>4<span class="c">平</span>2<span class="c">负</span>4, <span class="c">胜率</span>:<span style="color:#c81414">40%</span> <span class="c">让胜率</span>:<span style="color:#c81414">33.3%</span> <span class="c">大率</span>:<span style="color:#c81414">55.6%</span> <span class="c">单率</span>:<span style="color:#c81414">60%</span></div><div style="position:absolute;left:0px;top:31px;width:1028px;height:1px;background:#e6e6fa;"></div><div class="sel" style="left:573px;top:57px;width:61px;height:19px;font-family:"Liberation Sans",sans-serif;font-size:13px;"><span style="top:0px">Crow*</span><svg width="10" height="7" viewBox="0 0 10 7" style="position:absolute;right:4px;top:5px"><path d="M1 1.2 L5 5.2 L9 1.2" stroke="#000" stroke-width="2" fill="none"/></svg></div><div class="sel" style="left:640px;top:57px;width:52px;height:19px;font-family:"Liberation Sans",sans-serif;font-size:13px;"><span style="top:0px"><span class="c">终指</span></span><svg width="10" height="7" viewBox="0 0 10 7" style="position:absolute;right:4px;top:5px"><path d="M1 1.2 L5 5.2 L9 1.2" stroke="#000" stroke-width="2" fill="none"/></svg></div><div class="sel" style="left:745px;top:57px;width:70px;height:19px;font-family:"Liberation Sans",sans-serif;font-size:13px;"><span style="top:0px"><span class="c">平均值</span></span><svg width="10" height="7" viewBox="0 0 10 7" style="position:absolute;right:4px;top:5px"><path d="M1 1.2 L5 5.2 L9 1.2" stroke="#000" stroke-width="2" fill="none"/></svg></div><div class="sel" style="left:823px;top:57px;width:51px;height:19px;font-family:"Liberation Sans",sans-serif;font-size:13px;"><span style="top:0px"><span class="c">终指</span></span><svg width="10" height="7" viewBox="0 0 10 7" style="position:absolute;right:4px;top:5px"><path d="M1 1.2 L5 5.2 L9 1.2" stroke="#000" stroke-width="2" fill="none"/></svg></div><div class="sel" style="left:939px;top:57px;width:51px;height:19px;font-family:"Liberation Sans",sans-serif;font-size:13px;"><span style="top:0px"><span class="c">全场</span></span><svg width="10" height="7" viewBox="0 0 10 7" style="position:absolute;right:4px;top:5px"><path d="M1 1.2 L5 5.2 L9 1.2" stroke="#000" stroke-width="2" fill="none"/></svg></div><div style="position:absolute;left:0px;top:382px;width:1028px;height:25px;background:#dce3ec;"></div><div class="t st" style="left:20px;top:386px;width:200px;height:25px;line-height:25px;color:#1a1a1a;font-size:12px;font-weight:normal;text-align:left;"><span class="c">安德莱赫特</span></div><div class="t" style="left:384px;top:384px;height:25px;line-height:25px;font-size:12px;color:#333"><span class="c">近</span></div><div class="sel" style="left:400px;top:388px;width:38px;height:17px;font-family:"Liberation Mono",monospace;font-size:12px;"><span style="top:0px">10</span><svg width="10" height="7" viewBox="0 0 10 7" style="position:absolute;right:4px;top:4px"><path d="M1 1.2 L5 5.2 L9 1.2" stroke="#000" stroke-width="2" fill="none"/></svg></div><div class="t" style="left:443px;top:384px;height:25px;line-height:25px;font-size:12px;color:#333"><span class="c">场</span></div><div class="cb" style="left:458px;top:388px"></div><div class="t" style="left:475px;top:384px;height:25px;line-height:25px;font-size:12px;color:#333"><span class="c">同客</span></div><div class="cb on" style="left:503px;top:388px"><svg width="13" height="13" viewBox="0 0 13 13"><path d="M2.8 6.6 L5.3 9.2 L10.3 3.6" stroke="#fff" stroke-width="1.9" fill="none"/></svg></div><div class="t" style="left:516px;top:384px;height:25px;line-height:25px;font-size:12px;color:#333"><span class="c">比甲</span></div><div class="cb on" style="left:540px;top:388px"><svg width="13" height="13" viewBox="0 0 13 13"><path d="M2.8 6.6 L5.3 9.2 L10.3 3.6" stroke="#fff" stroke-width="1.9" fill="none"/></svg></div><div class="t" style="left:553px;top:384px;height:25px;line-height:25px;font-size:12px;color:#333"><span class="c">欧罗巴杯</span></div><div class="cb on" style="left:601px;top:388px"><svg width="13" height="13" viewBox="0 0 13 13"><path d="M2.8 6.6 L5.3 9.2 L10.3 3.6" stroke="#fff" stroke-width="1.9" fill="none"/></svg></div><div class="t" style="left:614px;top:384px;height:25px;line-height:25px;font-size:12px;color:#333"><span class="c">球会友谊</span></div><div class="cb on" style="left:662px;top:388px"><svg width="13" height="13" viewBox="0 0 13 13"><path d="M2.8 6.6 L5.3 9.2 L10.3 3.6" stroke="#fff" stroke-width="1.9" fill="none"/></svg></div><div class="t" style="left:675px;top:384px;height:25px;line-height:25px;font-size:12px;color:#333"><span class="c">比利时杯</span></div><div style="position:absolute;left:0px;top:407px;width:1028px;height:39px;background:#dce3ec;"></div><div style="position:absolute;left:0px;top:446px;width:1028px;height:26px;background:#fff;"></div><div style="position:absolute;left:507px;top:446px;width:185px;height:26px;background:#fdf8f3;"></div><div style="position:absolute;left:692px;top:446px;width:200px;height:26px;background:#f0f7fb;"></div><div style="position:absolute;left:1px;top:447px;width:80px;height:25px;background:#f79c0f;"></div><div style="position:absolute;left:0px;top:472px;width:1028px;height:26px;background:#f0f0f0;"></div><div style="position:absolute;left:507px;top:472px;width:185px;height:26px;background:#fdf8f3;"></div><div style="position:absolute;left:692px;top:472px;width:200px;height:26px;background:#f0f7fb;"></div><div style="position:absolute;left:1px;top:473px;width:80px;height:25px;background:#6600dd;"></div><div style="position:absolute;left:0px;top:498px;width:1028px;height:26px;background:#fff;"></div><div style="position:absolute;left:507px;top:498px;width:185px;height:26px;background:#fdf8f3;"></div><div style="position:absolute;left:692px;top:498px;width:200px;height:26px;background:#f0f7fb;"></div><div style="position:absolute;left:1px;top:499px;width:80px;height:25px;background:#0aa5a5;"></div><div style="position:absolute;left:0px;top:524px;width:1028px;height:26px;background:#f0f0f0;"></div><div style="position:absolute;left:507px;top:524px;width:185px;height:26px;background:#fdf8f3;"></div><div style="position:absolute;left:692px;top:524px;width:200px;height:26px;background:#f0f7fb;"></div><div style="position:absolute;left:1px;top:525px;width:80px;height:25px;background:#0aa5a5;"></div><div style="position:absolute;left:0px;top:550px;width:1028px;height:26px;background:#fff;"></div><div style="position:absolute;left:507px;top:550px;width:185px;height:26px;background:#fdf8f3;"></div><div style="position:absolute;left:692px;top:550px;width:200px;height:26px;background:#f0f7fb;"></div><div style="position:absolute;left:1px;top:551px;width:80px;height:25px;background:#0aa5a5;"></div><div style="position:absolute;left:0px;top:576px;width:1028px;height:26px;background:#f0f0f0;"></div><div style="position:absolute;left:507px;top:576px;width:185px;height:26px;background:#fdf8f3;"></div><div style="position:absolute;left:692px;top:576px;width:200px;height:26px;background:#f0f7fb;"></div><div style="position:absolute;left:1px;top:577px;width:80px;height:25px;background:#0aa5a5;"></div><div style="position:absolute;left:0px;top:602px;width:1028px;height:26px;background:#fff;"></div><div style="position:absolute;left:507px;top:602px;width:185px;height:26px;background:#fdf8f3;"></div><div style="position:absolute;left:692px;top:602px;width:200px;height:26px;background:#f0f7fb;"></div><div style="position:absolute;left:1px;top:603px;width:80px;height:25px;background:#0aa5a5;"></div><div style="position:absolute;left:0px;top:628px;width:1028px;height:26px;background:#f0f0f0;"></div><div style="position:absolute;left:507px;top:628px;width:185px;height:26px;background:#fdf8f3;"></div><div style="position:absolute;left:692px;top:628px;width:200px;height:26px;background:#f0f7fb;"></div><div style="position:absolute;left:1px;top:629px;width:80px;height:25px;background:#f79c0f;"></div><div style="position:absolute;left:0px;top:654px;width:1028px;height:26px;background:#fff;"></div><div style="position:absolute;left:507px;top:654px;width:185px;height:26px;background:#fdf8f3;"></div><div style="position:absolute;left:692px;top:654px;width:200px;height:26px;background:#f0f7fb;"></div><div style="position:absolute;left:1px;top:655px;width:80px;height:25px;background:#f79c0f;"></div><div style="position:absolute;left:0px;top:680px;width:1028px;height:26px;background:#f0f0f0;"></div><div style="position:absolute;left:507px;top:680px;width:185px;height:26px;background:#fdf8f3;"></div><div style="position:absolute;left:692px;top:680px;width:200px;height:26px;background:#f0f7fb;"></div><div style="position:absolute;left:1px;top:681px;width:80px;height:25px;background:#f79c0f;"></div><div style="position:absolute;left:0px;top:706px;width:1028px;height:26px;background:#fff;"></div><div style="position:absolute;left:0px;top:407px;width:1px;height:39px;background:#b9bec6;"></div><div style="position:absolute;left:0px;top:446px;width:1px;height:287px;background:#bebebe;"></div><div style="position:absolute;left:81px;top:407px;width:1px;height:39px;background:#b9bec6;"></div><div style="position:absolute;left:81px;top:446px;width:1px;height:260px;background:#bebebe;"></div><div style="position:absolute;left:157px;top:407px;width:1px;height:39px;background:#b9bec6;"></div><div style="position:absolute;left:157px;top:446px;width:1px;height:260px;background:#bebebe;"></div><div style="position:absolute;left:284px;top:407px;width:1px;height:39px;background:#b9bec6;"></div><div style="position:absolute;left:284px;top:446px;width:1px;height:260px;background:#bebebe;"></div><div style="position:absolute;left:374px;top:407px;width:1px;height:39px;background:#b9bec6;"></div><div style="position:absolute;left:374px;top:446px;width:1px;height:260px;background:#bebebe;"></div><div style="position:absolute;left:413px;top:407px;width:1px;height:39px;background:#b9bec6;"></div><div style="position:absolute;left:413px;top:446px;width:1px;height:260px;background:#bebebe;"></div><div style="position:absolute;left:507px;top:407px;width:1px;height:39px;background:#b9bec6;"></div><div style="position:absolute;left:507px;top:446px;width:1px;height:260px;background:#bebebe;"></div><div style="position:absolute;left:556px;top:427px;width:1px;height:19px;background:#b9bec6;"></div><div style="position:absolute;left:556px;top:446px;width:1px;height:260px;background:#bebebe;"></div><div style="position:absolute;left:640px;top:427px;width:1px;height:19px;background:#b9bec6;"></div><div style="position:absolute;left:640px;top:446px;width:1px;height:260px;background:#bebebe;"></div><div style="position:absolute;left:692px;top:407px;width:1px;height:39px;background:#b9bec6;"></div><div style="position:absolute;left:692px;top:446px;width:1px;height:260px;background:#bebebe;"></div><div style="position:absolute;left:758px;top:427px;width:1px;height:19px;background:#b9bec6;"></div><div style="position:absolute;left:758px;top:446px;width:1px;height:260px;background:#bebebe;"></div><div style="position:absolute;left:824px;top:427px;width:1px;height:19px;background:#b9bec6;"></div><div style="position:absolute;left:824px;top:446px;width:1px;height:260px;background:#bebebe;"></div><div style="position:absolute;left:892px;top:407px;width:1px;height:39px;background:#b9bec6;"></div><div style="position:absolute;left:892px;top:446px;width:1px;height:260px;background:#bebebe;"></div><div style="position:absolute;left:930px;top:427px;width:1px;height:19px;background:#b9bec6;"></div><div style="position:absolute;left:930px;top:446px;width:1px;height:260px;background:#bebebe;"></div><div style="position:absolute;left:969px;top:427px;width:1px;height:19px;background:#b9bec6;"></div><div style="position:absolute;left:969px;top:446px;width:1px;height:260px;background:#bebebe;"></div><div style="position:absolute;left:1027px;top:407px;width:1px;height:39px;background:#b9bec6;"></div><div style="position:absolute;left:1027px;top:446px;width:1px;height:287px;background:#bebebe;"></div><div style="position:absolute;left:0px;top:407px;width:1028px;height:1px;background:#b9bec6;"></div><div style="position:absolute;left:507px;top:427px;width:520px;height:1px;background:#b9bec6;"></div><div style="position:absolute;left:0px;top:446px;width:1028px;height:1px;background:#bebebe;"></div><div style="position:absolute;left:0px;top:472px;width:1028px;height:1px;background:#bebebe;"></div><div style="position:absolute;left:0px;top:498px;width:1028px;height:1px;background:#bebebe;"></div><div style="position:absolute;left:0px;top:524px;width:1028px;height:1px;background:#bebebe;"></div><div style="position:absolute;left:0px;top:550px;width:1028px;height:1px;background:#bebebe;"></div><div style="position:absolute;left:0px;top:576px;width:1028px;height:1px;background:#bebebe;"></div><div style="position:absolute;left:0px;top:602px;width:1028px;height:1px;background:#bebebe;"></div><div style="position:absolute;left:0px;top:628px;width:1028px;height:1px;background:#bebebe;"></div><div style="position:absolute;left:0px;top:654px;width:1028px;height:1px;background:#bebebe;"></div><div style="position:absolute;left:0px;top:680px;width:1028px;height:1px;background:#bebebe;"></div><div style="position:absolute;left:0px;top:706px;width:1028px;height:1px;background:#bebebe;"></div><div style="position:absolute;left:0px;top:732px;width:1028px;height:1px;background:#bebebe;"></div><div class="t w" style="left:1px;top:409px;width:80px;height:38px;line-height:38px;color:#333;font-size:12px;font-weight:normal;text-align:center;"><span class="c">类型</span></div><div class="t w" style="left:82px;top:409px;width:75px;height:38px;line-height:38px;color:#333;font-size:12px;font-weight:normal;text-align:center;"><span class="c">日期</span></div><div class="t w" style="left:158px;top:409px;width:126px;height:38px;line-height:38px;color:#333;font-size:12px;font-weight:normal;text-align:center;"><span class="c">主场</span></div><div class="t w" style="left:285px;top:409px;width:89px;height:38px;line-height:38px;color:#333;font-size:12px;font-weight:normal;text-align:center;"><span class="c">比分</span>(<span class="c">半场</span>)</div><div class="t w" style="left:375px;top:409px;width:38px;height:38px;line-height:38px;color:#333;font-size:12px;font-weight:normal;text-align:center;"><span class="c">角球</span></div><div class="t w" style="left:414px;top:409px;width:93px;height:38px;line-height:38px;color:#333;font-size:12px;font-weight:normal;text-align:center;"><span class="c">客场</span></div><div class="t w" style="left:508px;top:429px;width:48px;height:18px;line-height:18px;color:#333;font-size:12px;font-weight:normal;text-align:center;"><span class="c">主</span></div><div class="t w" style="left:557px;top:429px;width:83px;height:18px;line-height:18px;color:#333;font-size:12px;font-weight:normal;text-align:center;"><span class="c">让球</span></div><div class="t w" style="left:641px;top:429px;width:51px;height:18px;line-height:18px;color:#333;font-size:12px;font-weight:normal;text-align:center;"><span class="c">客</span></div><div class="t w" style="left:693px;top:429px;width:65px;height:18px;line-height:18px;color:#333;font-size:12px;font-weight:normal;text-align:center;"><span class="c">主</span></div><div class="t w" style="left:759px;top:429px;width:65px;height:18px;line-height:18px;color:#333;font-size:12px;font-weight:normal;text-align:center;"><span class="c">和</span></div><div class="t w" style="left:825px;top:429px;width:67px;height:18px;line-height:18px;color:#333;font-size:12px;font-weight:normal;text-align:center;"><span class="c">客</span></div><div class="t w" style="left:893px;top:429px;width:37px;height:18px;line-height:18px;color:#333;font-size:12px;font-weight:normal;text-align:center;"><span class="c">胜负</span></div><div class="t w" style="left:931px;top:429px;width:38px;height:18px;line-height:18px;color:#333;font-size:12px;font-weight:normal;text-align:center;"><span class="c">让球</span></div><div class="t w" style="left:970px;top:429px;width:57px;height:18px;line-height:18px;color:#333;font-size:12px;font-weight:normal;text-align:center;"><span class="c">进球数</span></div><div class="t w" style="left:1px;top:447px;width:80px;height:25px;line-height:25px;color:#fff;font-size:12px;font-weight:normal;text-align:center;"><span class="c">比甲</span></div><div class="t" style="left:82px;top:448px;width:75px;height:25px;line-height:25px;color:#1a1a1a;font-size:12px;font-weight:normal;text-align:center;">25-07-27</div><div class="t" style="left:158px;top:448px;width:126px;height:25px;line-height:25px;color:#1a1a1a;font-size:12px;font-weight:normal;text-align:center;"><span style="color:#157515"><span class="c">安德莱赫特</span></span></div><div class="t" style="left:285px;top:448px;width:89px;height:25px;line-height:25px;color:#1a1a1a;font-size:12px;font-weight:normal;text-align:center;"><span style="color:#c81414">5-2</span>(2-0)</div><div class="t" style="left:375px;top:448px;width:38px;height:25px;line-height:25px;color:#1a1a1a;font-size:12px;font-weight:normal;text-align:center;">8-3</div><div class="t" style="left:414px;top:448px;width:93px;height:25px;line-height:25px;color:#1a1a1a;font-size:12px;font-weight:normal;text-align:center;"><span class="c">韦斯特鲁</span></div><div class="t" style="left:508px;top:448px;width:48px;height:25px;line-height:25px;color:#1a1a1a;font-size:12px;font-weight:normal;text-align:center;">1.05</div><div class="t" style="left:557px;top:448px;width:83px;height:25px;line-height:25px;color:#1a1a1a;font-size:12px;font-weight:normal;text-align:center;"><span class="c">半</span>/<span class="c">一</span></div><div class="t" style="left:641px;top:448px;width:51px;height:25px;line-height:25px;color:#1a1a1a;font-size:12px;font-weight:normal;text-align:center;">0.84</div><div class="t" style="left:693px;top:448px;width:65px;height:25px;line-height:25px;color:#1a1a1a;font-size:12px;font-weight:normal;text-align:center;">1.76</div><div class="t" style="left:759px;top:448px;width:65px;height:25px;line-height:25px;color:#1a1a1a;font-size:12px;font-weight:normal;text-align:center;">3.83</div><div class="t" style="left:825px;top:448px;width:67px;height:25px;line-height:25px;color:#1a1a1a;font-size:12px;font-weight:normal;text-align:center;">4.13</div><div class="t" style="left:893px;top:448px;width:37px;height:25px;line-height:25px;color:#c81414;font-size:12px;font-weight:normal;text-align:center;"><span class="c">胜</span></div><div class="t" style="left:931px;top:448px;width:38px;height:25px;line-height:25px;color:#c81414;font-size:12px;font-weight:normal;text-align:center;"><span class="c">赢</span></div><div class="t" style="left:970px;top:448px;width:57px;height:25px;line-height:25px;color:#c81414;font-size:12px;font-weight:normal;text-align:center;"><span class="c">大</span></div><div class="t w" style="left:1px;top:473px;width:80px;height:25px;line-height:25px;color:#fff;font-size:12px;font-weight:normal;text-align:center;"><span class="c">欧罗巴杯</span></div><div class="t" style="left:82px;top:474px;width:75px;height:25px;line-height:25px;color:#1a1a1a;font-size:12px;font-weight:normal;text-align:center;">25-07-25</div><div class="t" style="left:158px;top:474px;width:126px;height:25px;line-height:25px;color:#1a1a1a;font-size:12px;font-weight:normal;text-align:center;"><span style="color:#157515"><span class="c">安德莱赫特</span></span></div><div class="t" style="left:285px;top:474px;width:89px;height:25px;line-height:25px;color:#1a1a1a;font-size:12px;font-weight:normal;text-align:center;"><span style="color:#c81414">1-0</span>(1-0)</div><div class="t" style="left:375px;top:474px;width:38px;height:25px;line-height:25px;color:#1a1a1a;font-size:12px;font-weight:normal;text-align:center;">6-5</div><div class="t" style="left:414px;top:474px;width:93px;height:25px;line-height:25px;color:#1a1a1a;font-size:12px;font-weight:normal;text-align:center;"><span class="c">赫根</span></div><div class="t" style="left:508px;top:474px;width:48px;height:25px;line-height:25px;color:#1a1a1a;font-size:12px;font-weight:normal;text-align:center;">0.98</div><div class="t" style="left:557px;top:474px;width:83px;height:25px;line-height:25px;color:#1a1a1a;font-size:12px;font-weight:normal;text-align:center;"><span class="c">一球</span></div><div class="t" style="left:641px;top:474px;width:51px;height:25px;line-height:25px;color:#1a1a1a;font-size:12px;font-weight:normal;text-align:center;">0.84</div><div class="t" style="left:693px;top:474px;width:65px;height:25px;line-height:25px;color:#1a1a1a;font-size:12px;font-weight:normal;text-align:center;">1.39</div><div class="t" style="left:759px;top:474px;width:65px;height:25px;line-height:25px;color:#1a1a1a;font-size:12px;font-weight:normal;text-align:center;">4.82</div><div class="t" style="left:825px;top:474px;width:67px;height:25px;line-height:25px;color:#1a1a1a;font-size:12px;font-weight:normal;text-align:center;">6.76</div><div class="t" style="left:893px;top:474px;width:37px;height:25px;line-height:25px;color:#c81414;font-size:12px;font-weight:normal;text-align:center;"><span class="c">胜</span></div><div class="t" style="left:931px;top:474px;width:38px;height:25px;line-height:25px;color:#0f8a0f;font-size:12px;font-weight:normal;text-align:center;"><span class="c">走</span></div><div class="t" style="left:970px;top:474px;width:57px;height:25px;line-height:25px;color:#1414a8;font-size:12px;font-weight:normal;text-align:center;"><span class="c">小</span></div><div class="t w" style="left:1px;top:499px;width:80px;height:25px;line-height:25px;color:#fff;font-size:12px;font-weight:normal;text-align:center;"><span class="c">球会友谊</span></div><div class="t" style="left:82px;top:500px;width:75px;height:25px;line-height:25px;color:#1a1a1a;font-size:12px;font-weight:normal;text-align:center;">25-07-19</div><div class="t" style="left:158px;top:500px;width:126px;height:25px;line-height:25px;color:#1a1a1a;font-size:12px;font-weight:normal;text-align:center;"><span style="color:#157515"><span class="c">安德莱赫特</span></span></div><div class="t" style="left:285px;top:500px;width:89px;height:25px;line-height:25px;color:#1a1a1a;font-size:12px;font-weight:normal;text-align:center;"><span style="color:#c81414">1-0</span>(1-0)</div><div class="t" style="left:375px;top:500px;width:38px;height:25px;line-height:25px;color:#1a1a1a;font-size:12px;font-weight:normal;text-align:center;">5-1</div><div class="t" style="left:414px;top:500px;width:93px;height:25px;line-height:25px;color:#1a1a1a;font-size:12px;font-weight:normal;text-align:center;"><span class="c">登德</span></div><div class="t" style="left:508px;top:500px;width:48px;height:25px;line-height:25px;color:#1a1a1a;font-size:12px;font-weight:normal;text-align:center;"></div><div class="t" style="left:557px;top:500px;width:83px;height:25px;line-height:25px;color:#1a1a1a;font-size:12px;font-weight:normal;text-align:center;"></div><div class="t" style="left:641px;top:500px;width:51px;height:25px;line-height:25px;color:#1a1a1a;font-size:12px;font-weight:normal;text-align:center;"></div><div class="t" style="left:693px;top:500px;width:65px;height:25px;line-height:25px;color:#1a1a1a;font-size:12px;font-weight:normal;text-align:center;">1.53</div><div class="t" style="left:759px;top:500px;width:65px;height:25px;line-height:25px;color:#1a1a1a;font-size:12px;font-weight:normal;text-align:center;">4.10</div><div class="t" style="left:825px;top:500px;width:67px;height:25px;line-height:25px;color:#1a1a1a;font-size:12px;font-weight:normal;text-align:center;">5.13</div><div class="t" style="left:893px;top:500px;width:37px;height:25px;line-height:25px;color:#c81414;font-size:12px;font-weight:normal;text-align:center;"><span class="c">胜</span></div><div class="t" style="left:931px;top:500px;width:38px;height:25px;line-height:25px;color:#1a1a1a;font-size:12px;font-weight:normal;text-align:center;"></div><div class="t" style="left:970px;top:500px;width:57px;height:25px;line-height:25px;color:#1a1a1a;font-size:12px;font-weight:normal;text-align:center;"></div><div class="t w" style="left:1px;top:525px;width:80px;height:25px;line-height:25px;color:#fff;font-size:12px;font-weight:normal;text-align:center;"><span class="c">球会友谊</span></div><div class="t" style="left:82px;top:526px;width:75px;height:25px;line-height:25px;color:#1a1a1a;font-size:12px;font-weight:normal;text-align:center;">25-07-12</div><div class="t" style="left:158px;top:526px;width:126px;height:25px;line-height:25px;color:#1a1a1a;font-size:12px;font-weight:normal;text-align:center;"><span style="color:#157515"><span class="c">安德莱赫特</span>(<span class="c">中</span>)</span></div><div class="t" style="left:285px;top:526px;width:89px;height:25px;line-height:25px;color:#1a1a1a;font-size:12px;font-weight:normal;text-align:center;"><span style="color:#c81414">5-0</span>(2-0)</div><div class="t" style="left:375px;top:526px;width:38px;height:25px;line-height:25px;color:#1a1a1a;font-size:12px;font-weight:normal;text-align:center;">5-5</div><div class="t" style="left:414px;top:526px;width:93px;height:25px;line-height:25px;color:#1a1a1a;font-size:12px;font-weight:normal;text-align:center;"><span class="c">多德勒支</span></div><div class="t" style="left:508px;top:526px;width:48px;height:25px;line-height:25px;color:#1a1a1a;font-size:12px;font-weight:normal;text-align:center;"></div><div class="t" style="left:557px;top:526px;width:83px;height:25px;line-height:25px;color:#1a1a1a;font-size:12px;font-weight:normal;text-align:center;"></div><div class="t" style="left:641px;top:526px;width:51px;height:25px;line-height:25px;color:#1a1a1a;font-size:12px;font-weight:normal;text-align:center;"></div><div class="t" style="left:693px;top:526px;width:65px;height:25px;line-height:25px;color:#1a1a1a;font-size:12px;font-weight:normal;text-align:center;">1.38</div><div class="t" style="left:759px;top:526px;width:65px;height:25px;line-height:25px;color:#1a1a1a;font-size:12px;font-weight:normal;text-align:center;">4.74</div><div class="t" style="left:825px;top:526px;width:67px;height:25px;line-height:25px;color:#1a1a1a;font-size:12px;font-weight:normal;text-align:center;">6.23</div><div class="t" style="left:893px;top:526px;width:37px;height:25px;line-height:25px;color:#c81414;font-size:12px;font-weight:normal;text-align:center;"><span class="c">胜</span></div><div class="t" style="left:931px;top:526px;width:38px;height:25px;line-height:25px;color:#1a1a1a;font-size:12px;font-weight:normal;text-align:center;"></div><div class="t" style="left:970px;top:526px;width:57px;height:25px;line-height:25px;color:#1a1a1a;font-size:12px;font-weight:normal;text-align:center;"></div><div class="t w" style="left:1px;top:551px;width:80px;height:25px;line-height:25px;color:#fff;font-size:12px;font-weight:normal;text-align:center;"><span class="c">球会友谊</span></div><div class="t" style="left:82px;top:552px;width:75px;height:25px;line-height:25px;color:#1a1a1a;font-size:12px;font-weight:normal;text-align:center;">25-07-12</div><div class="t" style="left:158px;top:552px;width:126px;height:25px;line-height:25px;color:#1a1a1a;font-size:12px;font-weight:normal;text-align:center;"><span style="color:#157515"><span class="c">安德莱赫特</span>(<span class="c">中</span>)</span></div><div class="t" style="left:285px;top:552px;width:89px;height:25px;line-height:25px;color:#1a1a1a;font-size:12px;font-weight:normal;text-align:center;"><span style="color:#c81414">2-2</span>(1-0)</div><div class="t" style="left:375px;top:552px;width:38px;height:25px;line-height:25px;color:#1a1a1a;font-size:12px;font-weight:normal;text-align:center;">10-7</div><div class="t" style="left:414px;top:552px;width:93px;height:25px;line-height:25px;color:#1a1a1a;font-size:12px;font-weight:normal;text-align:center;"><span class="c">琴斯托霍瓦</span></div><div class="t" style="left:508px;top:552px;width:48px;height:25px;line-height:25px;color:#1a1a1a;font-size:12px;font-weight:normal;text-align:center;">0.96</div><div class="t" style="left:557px;top:552px;width:83px;height:25px;line-height:25px;color:#1a1a1a;font-size:12px;font-weight:normal;text-align:center;"><span class="c">半</span>/<span class="c">一</span></div><div class="t" style="left:641px;top:552px;width:51px;height:25px;line-height:25px;color:#1a1a1a;font-size:12px;font-weight:normal;text-align:center;">0.86</div><div class="t" style="left:693px;top:552px;width:65px;height:25px;line-height:25px;color:#1a1a1a;font-size:12px;font-weight:normal;text-align:center;">1.81</div><div class="t" style="left:759px;top:552px;width:65px;height:25px;line-height:25px;color:#1a1a1a;font-size:12px;font-weight:normal;text-align:center;">3.49</div><div class="t" style="left:825px;top:552px;width:67px;height:25px;line-height:25px;color:#1a1a1a;font-size:12px;font-weight:normal;text-align:center;">3.86</div><div class="t" style="left:893px;top:552px;width:37px;height:25px;line-height:25px;color:#0f8a0f;font-size:12px;font-weight:normal;text-align:center;"><span class="c">平</span></div><div class="t" style="left:931px;top:552px;width:38px;height:25px;line-height:25px;color:#1414a8;font-size:12px;font-weight:normal;text-align:center;"><span class="c">输</span></div><div class="t" style="left:970px;top:552px;width:57px;height:25px;line-height:25px;color:#c81414;font-size:12px;font-weight:normal;text-align:center;"><span class="c">大</span></div><div class="t w" style="left:1px;top:577px;width:80px;height:25px;line-height:25px;color:#fff;font-size:12px;font-weight:normal;text-align:center;"><span class="c">球会友谊</span></div><div class="t" style="left:82px;top:578px;width:75px;height:25px;line-height:25px;color:#1a1a1a;font-size:12px;font-weight:normal;text-align:center;">25-07-05</div><div class="t" style="left:158px;top:578px;width:126px;height:25px;line-height:25px;color:#1a1a1a;font-size:12px;font-weight:normal;text-align:center;"><span style="color:#157515"><span class="c">安德莱赫特</span></span></div><div class="t" style="left:285px;top:578px;width:89px;height:25px;line-height:25px;color:#1a1a1a;font-size:12px;font-weight:normal;text-align:center;"><span style="color:#c81414">1-0</span>(1-0)</div><div class="t" style="left:375px;top:578px;width:38px;height:25px;line-height:25px;color:#1a1a1a;font-size:12px;font-weight:normal;text-align:center;">0-0</div><div class="t" style="left:414px;top:578px;width:93px;height:25px;line-height:25px;color:#1a1a1a;font-size:12px;font-weight:normal;text-align:center;"><span class="c">阿里斯</span></div><div class="t" style="left:508px;top:578px;width:48px;height:25px;line-height:25px;color:#1a1a1a;font-size:12px;font-weight:normal;text-align:center;"></div><div class="t" style="left:557px;top:578px;width:83px;height:25px;line-height:25px;color:#1a1a1a;font-size:12px;font-weight:normal;text-align:center;"></div><div class="t" style="left:641px;top:578px;width:51px;height:25px;line-height:25px;color:#1a1a1a;font-size:12px;font-weight:normal;text-align:center;"></div><div class="t" style="left:693px;top:578px;width:65px;height:25px;line-height:25px;color:#1a1a1a;font-size:12px;font-weight:normal;text-align:center;"></div><div class="t" style="left:759px;top:578px;width:65px;height:25px;line-height:25px;color:#1a1a1a;font-size:12px;font-weight:normal;text-align:center;"></div><div class="t" style="left:825px;top:578px;width:67px;height:25px;line-height:25px;color:#1a1a1a;font-size:12px;font-weight:normal;text-align:center;"></div><div class="t" style="left:893px;top:578px;width:37px;height:25px;line-height:25px;color:#c81414;font-size:12px;font-weight:normal;text-align:center;"><span class="c">胜</span></div><div class="t" style="left:931px;top:578px;width:38px;height:25px;line-height:25px;color:#1a1a1a;font-size:12px;font-weight:normal;text-align:center;"></div><div class="t" style="left:970px;top:578px;width:57px;height:25px;line-height:25px;color:#1a1a1a;font-size:12px;font-weight:normal;text-align:center;"></div><div class="t w" style="left:1px;top:603px;width:80px;height:25px;line-height:25px;color:#fff;font-size:12px;font-weight:normal;text-align:center;"><span class="c">球会友谊</span></div><div class="t" style="left:82px;top:604px;width:75px;height:25px;line-height:25px;color:#1a1a1a;font-size:12px;font-weight:normal;text-align:center;">25-07-02</div><div class="t" style="left:158px;top:604px;width:126px;height:25px;line-height:25px;color:#1a1a1a;font-size:12px;font-weight:normal;text-align:center;"><span style="color:#157515"><span class="c">安德莱赫特</span>(<span class="c">中</span>)</span></div><div class="t" style="left:285px;top:604px;width:89px;height:25px;line-height:25px;color:#1a1a1a;font-size:12px;font-weight:normal;text-align:center;"><span style="color:#c81414">2-2</span>(0-0)</div><div class="t" style="left:375px;top:604px;width:38px;height:25px;line-height:25px;color:#1a1a1a;font-size:12px;font-weight:normal;text-align:center;">0-7</div><div class="t" style="left:414px;top:604px;width:93px;height:25px;line-height:25px;color:#1a1a1a;font-size:12px;font-weight:normal;text-align:center;">AEK<span class="c">拉纳卡</span></div><div class="t" style="left:508px;top:604px;width:48px;height:25px;line-height:25px;color:#1a1a1a;font-size:12px;font-weight:normal;text-align:center;">0.81</div><div class="t" style="left:557px;top:604px;width:83px;height:25px;line-height:25px;color:#1a1a1a;font-size:12px;font-weight:normal;text-align:center;"><span class="c">半球</span></div><div class="t" style="left:641px;top:604px;width:51px;height:25px;line-height:25px;color:#1a1a1a;font-size:12px;font-weight:normal;text-align:center;">1.01</div><div class="t" style="left:693px;top:604px;width:65px;height:25px;line-height:25px;color:#1a1a1a;font-size:12px;font-weight:normal;text-align:center;">1.77</div><div class="t" style="left:759px;top:604px;width:65px;height:25px;line-height:25px;color:#1a1a1a;font-size:12px;font-weight:normal;text-align:center;">3.72</div><div class="t" style="left:825px;top:604px;width:67px;height:25px;line-height:25px;color:#1a1a1a;font-size:12px;font-weight:normal;text-align:center;">3.94</div><div class="t" style="left:893px;top:604px;width:37px;height:25px;line-height:25px;color:#0f8a0f;font-size:12px;font-weight:normal;text-align:center;"><span class="c">平</span></div><div class="t" style="left:931px;top:604px;width:38px;height:25px;line-height:25px;color:#1414a8;font-size:12px;font-weight:normal;text-align:center;"><span class="c">输</span></div><div class="t" style="left:970px;top:604px;width:57px;height:25px;line-height:25px;color:#c81414;font-size:12px;font-weight:normal;text-align:center;"><span class="c">大</span></div><div class="t w" style="left:1px;top:629px;width:80px;height:25px;line-height:25px;color:#fff;font-size:12px;font-weight:normal;text-align:center;"><span class="c">比甲</span></div><div class="t" style="left:82px;top:630px;width:75px;height:25px;line-height:25px;color:#1a1a1a;font-size:12px;font-weight:normal;text-align:center;">25-05-26</div><div class="t" style="left:158px;top:630px;width:126px;height:25px;line-height:25px;color:#1a1a1a;font-size:12px;font-weight:normal;text-align:center;"><span class="c">亨克</span></div><div class="t" style="left:285px;top:630px;width:89px;height:25px;line-height:25px;color:#1a1a1a;font-size:12px;font-weight:normal;text-align:center;"><span style="color:#c81414">2-1</span>(1-1)</div><div class="t" style="left:375px;top:630px;width:38px;height:25px;line-height:25px;color:#1a1a1a;font-size:12px;font-weight:normal;text-align:center;">3-4</div><div class="t" style="left:414px;top:630px;width:93px;height:25px;line-height:25px;color:#1a1a1a;font-size:12px;font-weight:normal;text-align:center;"><span style="color:#157515"><span class="c">安德莱赫特</span></span></div><div class="t" style="left:508px;top:630px;width:48px;height:25px;line-height:25px;color:#1a1a1a;font-size:12px;font-weight:normal;text-align:center;">1.02</div><div class="t" style="left:557px;top:630px;width:83px;height:25px;line-height:25px;color:#1a1a1a;font-size:12px;font-weight:normal;text-align:center;"><span class="c">半球</span></div><div class="t" style="left:641px;top:630px;width:51px;height:25px;line-height:25px;color:#1a1a1a;font-size:12px;font-weight:normal;text-align:center;">0.87</div><div class="t" style="left:693px;top:630px;width:65px;height:25px;line-height:25px;color:#1a1a1a;font-size:12px;font-weight:normal;text-align:center;">1.95</div><div class="t" style="left:759px;top:630px;width:65px;height:25px;line-height:25px;color:#1a1a1a;font-size:12px;font-weight:normal;text-align:center;">3.62</div><div class="t" style="left:825px;top:630px;width:67px;height:25px;line-height:25px;color:#1a1a1a;font-size:12px;font-weight:normal;text-align:center;">3.53</div><div class="t" style="left:893px;top:630px;width:37px;height:25px;line-height:25px;color:#1414a8;font-size:12px;font-weight:normal;text-align:center;"><span class="c">负</span></div><div class="t" style="left:931px;top:630px;width:38px;height:25px;line-height:25px;color:#1414a8;font-size:12px;font-weight:normal;text-align:center;"><span class="c">输</span></div><div class="t" style="left:970px;top:630px;width:57px;height:25px;line-height:25px;color:#0f8a0f;font-size:12px;font-weight:normal;text-align:center;"><span class="c">走</span></div><div class="t w" style="left:1px;top:655px;width:80px;height:25px;line-height:25px;color:#fff;font-size:12px;font-weight:normal;text-align:center;"><span class="c">比甲</span></div><div class="t" style="left:82px;top:656px;width:75px;height:25px;line-height:25px;color:#1a1a1a;font-size:12px;font-weight:normal;text-align:center;">25-05-18</div><div class="t" style="left:158px;top:656px;width:126px;height:25px;line-height:25px;color:#1a1a1a;font-size:12px;font-weight:normal;text-align:center;"><span style="color:#157515"><span class="c">安德莱赫特</span></span></div><div class="t" style="left:285px;top:656px;width:89px;height:25px;line-height:25px;color:#1a1a1a;font-size:12px;font-weight:normal;text-align:center;"><span style="color:#c81414">1-3</span>(1-3)</div><div class="t" style="left:375px;top:656px;width:38px;height:25px;line-height:25px;color:#1a1a1a;font-size:12px;font-weight:normal;text-align:center;">6-4</div><div class="t" style="left:414px;top:656px;width:93px;height:25px;line-height:25px;color:#1a1a1a;font-size:12px;font-weight:normal;text-align:center;"><span class="c">布鲁日</span></div><div class="t" style="left:508px;top:656px;width:48px;height:25px;line-height:25px;color:#1a1a1a;font-size:12px;font-weight:normal;text-align:center;">1.04</div><div class="t" style="left:557px;top:656px;width:83px;height:25px;line-height:25px;color:#1a1a1a;font-size:12px;font-weight:normal;text-align:center;"><span class="c">受半</span>/<span class="c">一</span></div><div class="t" style="left:641px;top:656px;width:51px;height:25px;line-height:25px;color:#1a1a1a;font-size:12px;font-weight:normal;text-align:center;">0.85</div><div class="t" style="left:693px;top:656px;width:65px;height:25px;line-height:25px;color:#1a1a1a;font-size:12px;font-weight:normal;text-align:center;">4.60</div><div class="t" style="left:759px;top:656px;width:65px;height:25px;line-height:25px;color:#1a1a1a;font-size:12px;font-weight:normal;text-align:center;">3.91</div><div class="t" style="left:825px;top:656px;width:67px;height:25px;line-height:25px;color:#1a1a1a;font-size:12px;font-weight:normal;text-align:center;">1.67</div><div class="t" style="left:893px;top:656px;width:37px;height:25px;line-height:25px;color:#1414a8;font-size:12px;font-weight:normal;text-align:center;"><span class="c">负</span></div><div class="t" style="left:931px;top:656px;width:38px;height:25px;line-height:25px;color:#1414a8;font-size:12px;font-weight:normal;text-align:center;"><span class="c">输</span></div><div class="t" style="left:970px;top:656px;width:57px;height:25px;line-height:25px;color:#c81414;font-size:12px;font-weight:normal;text-align:center;"><span class="c">大</span></div><div class="t w" style="left:1px;top:681px;width:80px;height:25px;line-height:25px;color:#fff;font-size:12px;font-weight:normal;text-align:center;"><span class="c">比甲</span></div><div class="t" style="left:82px;top:682px;width:75px;height:25px;line-height:25px;color:#1a1a1a;font-size:12px;font-weight:normal;text-align:center;">25-05-11</div><div class="t" style="left:158px;top:682px;width:126px;height:25px;line-height:25px;color:#1a1a1a;font-size:12px;font-weight:normal;text-align:center;"><span style="color:#157515"><span class="c">安德莱赫特</span></span></div><div class="t" style="left:285px;top:682px;width:89px;height:25px;line-height:25px;color:#1a1a1a;font-size:12px;font-weight:normal;text-align:center;"><span style="color:#c81414">0-1</span>(0-1)</div><div class="t" style="left:375px;top:682px;width:38px;height:25px;line-height:25px;color:#1a1a1a;font-size:12px;font-weight:normal;text-align:center;">2-4</div><div class="t" style="left:414px;top:682px;width:93px;height:25px;line-height:25px;color:#1a1a1a;font-size:12px;font-weight:normal;text-align:center;"><span class="c">圣吉罗斯</span></div><div class="t" style="left:508px;top:682px;width:48px;height:25px;line-height:25px;color:#1a1a1a;font-size:12px;font-weight:normal;text-align:center;">1.03</div><div class="t" style="left:557px;top:682px;width:83px;height:25px;line-height:25px;color:#1a1a1a;font-size:12px;font-weight:normal;text-align:center;"><span class="c">受平</span>/<span class="c">半</span></div><div class="t" style="left:641px;top:682px;width:51px;height:25px;line-height:25px;color:#1a1a1a;font-size:12px;font-weight:normal;text-align:center;">0.86</div><div class="t" style="left:693px;top:682px;width:65px;height:25px;line-height:25px;color:#1a1a1a;font-size:12px;font-weight:normal;text-align:center;">3.68</div><div class="t" style="left:759px;top:682px;width:65px;height:25px;line-height:25px;color:#1a1a1a;font-size:12px;font-weight:normal;text-align:center;">3.25</div><div class="t" style="left:825px;top:682px;width:67px;height:25px;line-height:25px;color:#1a1a1a;font-size:12px;font-weight:normal;text-align:center;">2.03</div><div class="t" style="left:893px;top:682px;width:37px;height:25px;line-height:25px;color:#1414a8;font-size:12px;font-weight:normal;text-align:center;"><span class="c">负</span></div><div class="t" style="left:931px;top:682px;width:38px;height:25px;line-height:25px;color:#1414a8;font-size:12px;font-weight:normal;text-align:center;"><span class="c">输</span></div><div class="t" style="left:970px;top:682px;width:57px;height:25px;line-height:25px;color:#1414a8;font-size:12px;font-weight:normal;text-align:center;"><span class="c">小</span></div><div class="t" style="left:1px;top:707px;width:1026px;height:25px;line-height:25px;color:#1a1a1a;font-size:12px;font-weight:normal;text-align:center;letter-spacing:0.19px;"><span class="c">近</span><span style="color:#c81414">10</span><span class="c">场</span>,<span class="c">胜</span>5<span class="c">平</span>2<span class="c">负</span>3, <span class="c">胜率</span>:<span style="color:#c81414">50%</span> <span class="c">让胜率</span>:<span style="color:#c81414">14.3%</span> <span class="c">大率</span>:<span style="color:#c81414">57.1%</span> <span class="c">单率</span>:<span style="color:#c81414">70%</span></div><div class="sel" style="left:541px;top:408px;width:60px;height:19px;font-family:"Liberation Sans",sans-serif;font-size:13px;"><span style="top:0px">Crow*</span><svg width="10" height="7" viewBox="0 0 10 7" style="position:absolute;right:4px;top:5px"><path d="M1 1.2 L5 5.2 L9 1.2" stroke="#000" stroke-width="2" fill="none"/></svg></div><div class="sel" style="left:609px;top:408px;width:50px;height:19px;font-family:"Liberation Sans",sans-serif;font-size:13px;"><span style="top:0px"><span class="c">终指</span></span><svg width="10" height="7" viewBox="0 0 10 7" style="position:absolute;right:4px;top:5px"><path d="M1 1.2 L5 5.2 L9 1.2" stroke="#000" stroke-width="2" fill="none"/></svg></div><div class="sel" style="left:729px;top:408px;width:69px;height:19px;font-family:"Liberation Sans",sans-serif;font-size:13px;"><span style="top:0px"><span class="c">平均值</span></span><svg width="10" height="7" viewBox="0 0 10 7" style="position:absolute;right:4px;top:5px"><path d="M1 1.2 L5 5.2 L9 1.2" stroke="#000" stroke-width="2" fill="none"/></svg></div><div class="sel" style="left:805px;top:408px;width:52px;height:19px;font-family:"Liberation Sans",sans-serif;font-size:13px;"><span style="top:0px"><span class="c">终指</span></span><svg width="10" height="7" viewBox="0 0 10 7" style="position:absolute;right:4px;top:5px"><path d="M1 1.2 L5 5.2 L9 1.2" stroke="#000" stroke-width="2" fill="none"/></svg></div><div class="sel" style="left:935px;top:408px;width:51px;height:19px;font-family:"Liberation Sans",sans-serif;font-size:13px;"><span style="top:0px"><span class="c">全场</span></span><svg width="10" height="7" viewBox="0 0 10 7" style="position:absolute;right:4px;top:5px"><path d="M1 1.2 L5 5.2 L9 1.2" stroke="#000" stroke-width="2" fill="none"/></svg></div></body></html>
